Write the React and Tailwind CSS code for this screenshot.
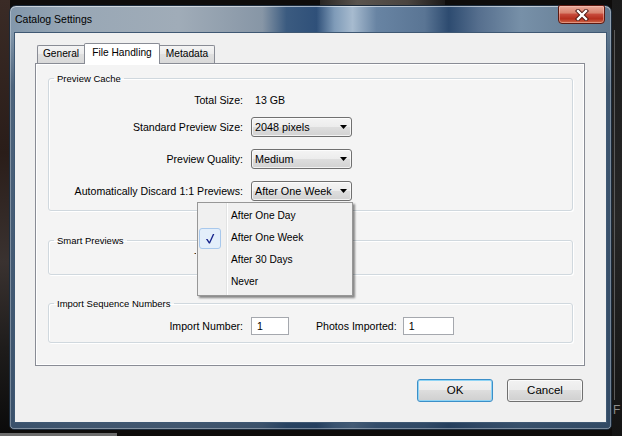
import React from "react";

const FONT = "font-['Liberation_Sans',Arial,Helvetica,sans-serif]";

function Select({ value }) {
  return (
    <div className="flex h-[20px] w-[101px] items-center justify-between rounded-[3px] border border-[#707070] bg-[linear-gradient(to_bottom,#f4f4f4_0%,#ececec_50%,#dedede_50%,#d2d2d2_100%)] pl-[3px] pr-[4px] text-[10.8px] leading-none text-black shadow-[inset_0_0_0_1px_rgba(255,255,255,0.7)]">
      <span>{value}</span>
      <svg width="7" height="4" viewBox="0 0 7 4">
        <path d="M0 0H7L3.5 4Z" fill="#000" />
      </svg>
    </div>
  );
}

function Row({ label, children, className }) {
  return (
    <div className={`flex h-[18px] items-center ${className}`}>
      <div className="w-[194px] text-right text-[10.6px] leading-none text-black">{label}</div>
      <div className="ml-[8px] flex items-center">{children}</div>
    </div>
  );
}

function Input({ value, className }) {
  return (
    <div className={`flex h-[18px] items-center border border-[#a5a8ae] bg-white pl-[5px] text-[10.6px] leading-none text-black ${className}`}>
      {value}
    </div>
  );
}

function Group({ title, className, children }) {
  return (
    <fieldset className={`rounded-[3px] border border-[#d0d8de] shadow-[inset_1px_1px_0_#ffffff,1px_1px_0_#ffffff] ${className}`}>
      <legend className="ml-[5px] px-[3px] text-[9.5px] leading-[13px] text-black">{title}</legend>
      {children}
    </fieldset>
  );
}

function CloseButton() {
  return (
    <div className="-mt-[1px] mr-[6px] flex h-[19px] w-[47px] items-center justify-center rounded-b-[4px] rounded-t-[2px] border border-[#5b1a12] bg-[linear-gradient(to_bottom,#e9a999_0%,#d9836f_40%,#c6493a_50%,#b52f1e_75%,#cf6848_100%)] shadow-[inset_0_0_0_1px_rgba(255,210,200,0.45)]">
      <svg width="14" height="12" viewBox="0 0 14 12">
        <path d="M3 2L11 10M11 2L3 10" stroke="#4a1510" strokeWidth="4.2" strokeLinecap="square" />
        <path d="M3 2L11 10M11 2L3 10" stroke="#ffffff" strokeWidth="2.4" strokeLinecap="square" />
      </svg>
    </div>
  );
}

function Button({ children, primary }) {
  return (
    <div
      className={
        primary
          ? "flex h-[23px] w-[76px] items-center justify-center rounded-[3px] border border-[#3c8fc8] bg-[linear-gradient(to_bottom,#f2f2f2_0%,#ebebeb_50%,#dddddd_50%,#cfcfcf_100%)] text-[11.5px] text-black shadow-[inset_0_0_0_1px_#8fd4f5]"
          : "flex h-[23px] w-[76px] items-center justify-center rounded-[3px] border border-[#707070] bg-[linear-gradient(to_bottom,#f2f2f2_0%,#ebebeb_50%,#dddddd_50%,#cfcfcf_100%)] text-[11.5px] text-black shadow-[inset_0_0_0_1px_rgba(255,255,255,0.7)]"
      }
    >
      {children}
    </div>
  );
}

function Menu() {
  const items = ["After One Day", "After One Week", "After 30 Days", "Never"];
  return (
    <div className="absolute left-[197px] top-[202px] h-[94px] w-[156px] border border-[#979797] bg-[linear-gradient(to_right,#f0f0f0_0px,#f0f0f0_28px,#e2e3e3_28px,#e2e3e3_29px,#ffffff_29px,#ffffff_30px,#f0f0f0_30px)] pt-[2px] shadow-[2px_2px_2px_rgba(0,0,0,0.45)]">
      {items.map((t, i) => (
        <div key={t} className="flex h-[22px] items-center">
          <div className="flex w-[33px] items-center">
            {i === 1 ? (
              <div className="ml-[1px] flex h-[21px] w-[22px] items-center justify-center rounded-[3px] border border-[#a8c8ec] bg-[#e3eefa]">
                <svg width="22" height="21" viewBox="0 0 22 21">
                  <path d="M6.5 11L8.3 11L10.3 14.2L14.2 5.5L15.8 5.5L11 16L9.8 16Z" fill="#15218a" />
                </svg>
              </div>
            ) : null}
          </div>
          <span className="text-[10.2px] leading-none text-black">{t}</span>
        </div>
      ))}
    </div>
  );
}

export default function App() {
  return (
    <div className={`relative h-[436px] w-[622px] overflow-hidden bg-[#0e0c0b] pl-[9px] pt-[5px] ${FONT}`}>
      {/* desktop backdrop */}
      <div className="absolute left-0 top-0 h-full w-[10px] bg-[linear-gradient(to_bottom,#3a2b26_0%,#2a1d19_35%,#3a3230_60%,#1e1c1b_80%,#0a0a0a_100%)]" />
      <div className="absolute left-[320px] top-0 h-[6px] w-[125px] bg-[linear-gradient(to_right,#2a2725,#5a544e_30%,#4b4540_70%,#1c1a19)]" />
      <div className="absolute left-[612px] top-0 h-full w-[10px] bg-[linear-gradient(to_bottom,#1b1b1b,#262626_50%,#141414)]" />
      <div className="absolute left-[614px] top-[30px] h-[370px] w-[1px] bg-[#5a5a5a]" />
      <div className="absolute bottom-0 left-0 h-[3px] w-[117px] bg-[#6c6c6c]" />
      <span className="absolute left-[613px] top-[404px] text-[12px] leading-none text-[#8c8c8c]">F</span>

      {/* window */}
      <div className="relative flex h-[425px] w-[603px] flex-col rounded-b-[5px] rounded-t-[7px] border border-[#1b2a3a] bg-[linear-gradient(to_bottom,rgba(0,0,0,0)_0px,rgba(0,0,0,0)_26px,rgba(34,58,86,0.55)_80px,rgba(34,58,86,0.75)_100%),linear-gradient(to_right,#8297ab_0%,#98a7b5_10%,#a0acb8_28%,#8796a6_42%,#3b5b80_46%,#2f5079_51%,#7f9bb8_54%,#a7bbcf_57%,#6884a3_61%,#5a7594_69%,#2d4b70_73%,#566f8e_78%,#7790a8_85%,#60788f_100%)] shadow-[inset_0_1px_0_rgba(255,255,255,0.55),inset_1px_0_0_rgba(255,255,255,0.3),inset_-1px_0_0_rgba(255,255,255,0.3),inset_0_-1px_0_rgba(255,255,255,0.35)]">
        <div className="flex h-[26px] shrink-0 items-start justify-between">
          <span className="self-center pl-[5px] text-[10.5px] leading-none text-black">Catalog Settings</span>
          <CloseButton />
        </div>

        <div className="mx-[4px] flex h-[391px] flex-col border border-[#3f5873] bg-[#f0f0f0] pl-[20px] pr-[21px] pt-[10px]">
          {/* tabs */}
          <div className="flex h-[20px] items-end pl-[2px] text-[10.2px] leading-none text-black">
            <div className="flex h-[18px] w-[47px] items-center justify-center rounded-tl-[2px] border-l border-t border-[#898c95] bg-[linear-gradient(to_bottom,#f4f4f4_0%,#ebebeb_50%,#e0e0e0_50%,#d9d9d9_100%)]">
              General
            </div>
            <div className="relative z-10 -mb-[1px] flex h-[21px] w-[76px] items-center justify-center rounded-t-[2px] border-l border-r border-t border-[#898c95] bg-white pb-[2px]">
              File Handling
            </div>
            <div className="flex h-[18px] w-[55px] items-center justify-center rounded-tr-[2px] border-r border-t border-[#898c95] bg-[linear-gradient(to_bottom,#f4f4f4_0%,#ebebeb_50%,#e0e0e0_50%,#d9d9d9_100%)]">
              Metadata
            </div>
          </div>

          {/* panel */}
          <div className="flex h-[303px] flex-col border border-[#898c95] bg-[#f4f4f4] pl-[12px] pr-[11px] pt-[8px] shadow-[inset_1px_1px_0_#ffffff,inset_-1px_-1px_0_#ffffff]">
            <Group title="Preview Cache" className="pb-[9px]">
              <Row label="Total Size:" className="mt-[6px]">
                <span className="pl-[4px] text-[10.6px] leading-none text-black">13 GB</span>
              </Row>
              <Row label="Standard Preview Size:" className="mt-[8px] h-[20px]">
                <Select value="2048 pixels" />
              </Row>
              <Row label="Preview Quality:" className="mt-[12px] h-[20px]">
                <Select value="Medium" />
              </Row>
              <Row label="Automatically Discard 1:1 Previews:" className="mt-[12px] h-[20px]">
                <Select value="After One Week" />
              </Row>
            </Group>

            <Group title="Smart Previews" className="mt-[23px] pb-[8px]">
              {/* row partly hidden by the open menu: only its first letter shows */}
              <div className="mt-[1px] flex h-[18px] items-center">
                <div className="w-[147px] overflow-hidden">
                  <div className="w-[194px] shrink-0 text-right text-[10.6px] leading-none text-black">Total Size:</div>
                </div>
              </div>
            </Group>

            <Group title="Import Sequence Numbers" className="mt-[22px] pb-[7px]">
              <Row label="Import Number:" className="mt-[7px]">
                <Input value="1" className="w-[38px]" />
                <span className="ml-[27px] text-[10.6px] leading-none text-black">Photos Imported:</span>
                <Input value="1" className="ml-[6px] w-[51px]" />
              </Row>
            </Group>
          </div>

          {/* buttons */}
          <div className="mt-[13px] flex justify-end gap-[14px] pr-[2px]">
            <Button primary>OK</Button>
            <Button>Cancel</Button>
          </div>
        </div>
      </div>

      <Menu />
    </div>
  );
}
